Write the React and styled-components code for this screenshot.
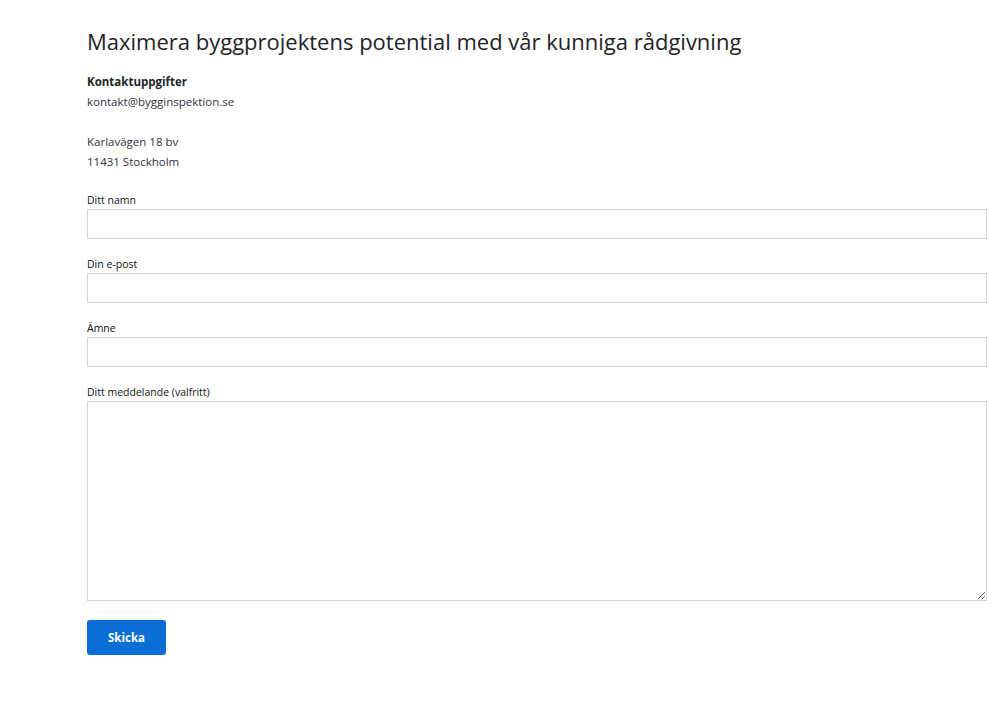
import styled, { createGlobalStyle } from 'styled-components';

const GlobalStyle = createGlobalStyle`
  body {
    margin: 0;
    background: #fff;
    font-family: "Open Sans", "Noto Sans", sans-serif;
    color: #212529;
  }
`;

const Page = styled.main`
  width: 900px;
  padding: 25px 0 0 87px;
`;

const Title = styled.h1`
  margin: 0 0 15px;
  font-size: 22px;
  font-weight: 500;
  line-height: 32px;
  color: #1f2328;
`;

const Contact = styled.div`
  font-size: 11.5px;
  line-height: 20px;
  color: #2f3242;
  margin-bottom: 20px;
  strong {
    display: block;
    font-weight: 700;
    color: #212529;
  }
  p {
    margin: 0 0 20px;
  }
  p:last-child {
    margin: 0;
  }
`;

const Form = styled.form`
  display: flex;
  flex-direction: column;
  gap: 17px;
`;

const Field = styled.label`
  display: flex;
  flex-direction: column;
  gap: 1px;
  font-size: 10.5px;
  line-height: 16px;
  color: #111;
`;

const Input = styled.input`
  box-sizing: border-box;
  width: 900px;
  height: 30px;
  border: 1px solid #d3d4d8;
  border-radius: 0;
  padding: 4px 8px;
  font: inherit;
  outline: none;
`;

const TextArea = styled.textarea`
  box-sizing: border-box;
  width: 900px;
  height: 200px;
  border: 1px solid #d3d4d8;
  border-radius: 0;
  padding: 4px 8px;
  font: inherit;
  outline: none;
`;

const Button = styled.button`
  align-self: flex-start;
  margin-top: 2px;
  width: 79px;
  height: 35px;
  border: none;
  border-radius: 3px;
  background: #0a6ed6;
  color: #fff;
  font-family: inherit;
  font-size: 11.5px;
  font-weight: 700;
  cursor: pointer;
`;

export default function App() {
  return (
    <>
      <GlobalStyle />
      <Page>
        <Title>Maximera byggprojektens potential med vår kunniga rådgivning</Title>
        <Contact>
          <p>
            <strong>Kontaktuppgifter</strong>
            kontakt@bygginspektion.se
          </p>
          <p>
            Karlavägen 18 bv
            <br />
            11431 Stockholm
          </p>
        </Contact>
        <Form onSubmit={(e) => e.preventDefault()}>
          <Field>
            Ditt namn
            <Input type="text" />
          </Field>
          <Field>
            Din e-post
            <Input type="email" />
          </Field>
          <Field>
            Ämne
            <Input type="text" />
          </Field>
          <Field>
            Ditt meddelande (valfritt)
            <TextArea />
          </Field>
          <Button type="submit">Skicka</Button>
        </Form>
      </Page>
    </>
  );
}
